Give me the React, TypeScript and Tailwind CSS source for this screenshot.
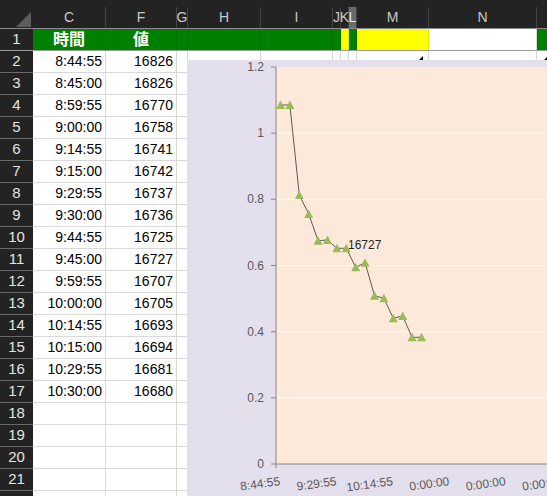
import React from "react";

type Col = { k: string; w: string; fill: string; sel?: boolean; hide?: boolean };

const cols: Col[] = [
  { k: "C", w: "w-[73px]", fill: "bg-[#008000] border-black/10" },
  { k: "F", w: "w-[71px]", fill: "bg-[#008000] border-black/10" },
  { k: "G", w: "w-[11px]", fill: "bg-[#008000] border-black/10" },
  { k: "H", w: "w-[73px]", fill: "bg-[#008000] border-black/10" },
  { k: "I", w: "w-[72px]", fill: "bg-[#008000] border-black/10" },
  { k: "J", w: "w-[8px]", fill: "bg-[#008000] border-black/10" },
  { k: "K", w: "w-[8px]", fill: "bg-[#ffff00] border-black/10" },
  { k: "L", w: "w-[8px]", fill: "bg-[#008000] border-black/10", sel: true },
  { k: "M", w: "w-[72px]", fill: "bg-[#ffff00] border-black/10" },
  { k: "N", w: "w-[108px]", fill: "bg-white border-[#d9d9d9]" },
  { k: "O", w: "w-[80px]", fill: "bg-[#008000] border-black/10", hide: true },
];

const data: [string, string][] = [
  ["8:44:55", "16826"],
  ["8:45:00", "16826"],
  ["8:59:55", "16770"],
  ["9:00:00", "16758"],
  ["9:14:55", "16741"],
  ["9:15:00", "16742"],
  ["9:29:55", "16737"],
  ["9:30:00", "16736"],
  ["9:44:55", "16725"],
  ["9:45:00", "16727"],
  ["9:59:55", "16707"],
  ["10:00:00", "16705"],
  ["10:14:55", "16693"],
  ["10:15:00", "16694"],
  ["10:29:55", "16681"],
  ["10:30:00", "16680"],
];

const ptsY = [105, 105, 195, 214, 240.7, 240, 248.3, 248.3, 267.3, 262.7, 295.7, 298.3, 318.3, 316, 337.3, 337.3];

function Chart() {
  const x0 = 280.5;
  const dx = 9.4;
  const pts = ptsY.map((y, i) => [x0 + i * dx, y] as [number, number]);
  const grid = [67, 133.2, 199.3, 265.5, 331.7, 397.8, 464];
  const ylabels = ["1.2", "1", "0.8", "0.6", "0.4", "0.2", "0"];
  const xl = ["8:44:55", "9:29:55", "10:14:55", "0:00:00", "0:00:00", "0:00:00"];
  return (
    <div className="absolute left-[187px] top-[60px] w-[360px] h-[436px] bg-[#e4dfec]">
      <svg width="360" height="436" viewBox="187 60 360 436" className="block">
        <rect x="276" y="67" width="300" height="397" fill="#fde9d9" />
        {grid.slice(1, 6).map((y) => (
          <line key={y} x1="276" x2="560" y1={y} y2={y} stroke="#ffffff" strokeWidth="1" />
        ))}
        <line x1="276" x2="276" y1="67" y2="468" stroke="#868686" strokeWidth="1" />
        <line x1="276" x2="560" y1="464" y2="464" stroke="#868686" strokeWidth="1" />
        {grid.map((y) => (
          <line key={"t" + y} x1="271" x2="276" y1={y} y2={y} stroke="#868686" strokeWidth="1" />
        ))}
        {ylabels.map((t, i) => (
          <text
            key={t}
            x="264"
            y={grid[i] + 4}
            textAnchor="end"
            fontSize="12"
            fill="#595959"
            fontFamily="'Liberation Sans', sans-serif"
          >
            {t}
          </text>
        ))}
        {xl.map((t, i) => {
          const cx = x0 + i * 6 * dx;
          return (
            <text
              key={i}
              x={cx}
              y="485"
              textAnchor="end"
              fontSize="12"
              fill="#595959"
              fontFamily="'Liberation Sans', sans-serif"
              transform={`rotate(-8 ${cx} 485)`}
            >
              {t}
            </text>
          );
        })}
        <polyline
          points={pts.map((p) => p.join(",")).join(" ")}
          fill="none"
          stroke="#5a5a5a"
          strokeWidth="1"
        />
        {pts.map(([x, y], i) => (
          <polygon
            key={i}
            points={`${x},${y - 4.5} ${x - 4.5},${y + 4} ${x + 4.5},${y + 4}`}
            fill="#9bbb59"
          />
        ))}
        <text
          x="348"
          y="249"
          fontSize="12"
          fill="#262626"
          fontFamily="'Liberation Sans', sans-serif"
        >
          16727
        </text>
      </svg>
    </div>
  );
}

export default function App() {
  const rows = Array.from({ length: 21 }, (_, i) => i + 2);
  return (
    <div
      className="relative w-[547px] h-[496px] overflow-hidden bg-white"
      style={{ fontFamily: "'Liberation Sans', 'Noto Sans CJK JP', sans-serif" }}
    >
      {/* column header */}
      <div className="flex h-[29px] bg-[#232323] border-b border-[#8a8a8a]">
        <div className="w-[33px] shrink-0 relative">
          <svg width="33" height="28" className="absolute left-0 top-0">
            <polygon points="31,12 31,27 16,27" fill="#5d5d5d" />
          </svg>
        </div>
        {cols.map((c) => (
          <div key={c.k} className={`${c.w} shrink-0 flex flex-col justify-end`}>
            <div
              className={`h-[21px] border-r border-[#444444] flex items-center justify-center text-[14px] ${
                c.sel ? "bg-[#6a6a6a] text-[#e8e8e8]" : "text-[#c9c9c9]"
              }`}
            >
              {c.hide ? "" : c.k}
            </div>
          </div>
        ))}
      </div>

      {/* row 1 */}
      <div className="flex h-[22px]">
        <div className="w-[33px] shrink-0 bg-[#232323] border-b border-[#6a6a6a] flex items-center justify-center text-[15px] text-[#e4e4e4]">
          1
        </div>
        {cols.map((c) => (
          <div
            key={c.k}
            className={`${c.w} shrink-0 ${c.fill} border-r border-b-0 flex items-center justify-center`}
          >
            {c.k === "C" && <span className="text-white font-bold text-[16px] leading-none">時間</span>}
            {c.k === "F" && <span className="text-white font-bold text-[16px] leading-none">値</span>}
          </div>
        ))}
      </div>
      <div className="h-px bg-[#9a9a9a] -mt-px relative" />

      {/* data rows */}
      {rows.map((r) => {
        const d = data[r - 2];
        return (
          <div key={r} className="flex h-[22px]">
            <div className="w-[33px] shrink-0 bg-[#232323] border-b border-[#6a6a6a] flex items-center justify-center text-[15px] text-[#e4e4e4]">
              {r <= 21 ? r : ""}
            </div>
            {cols.map((c) => (
              <div
                key={c.k}
                className={`${c.w} shrink-0 border-r border-b border-[#d9d9d9] flex items-center justify-end pr-[3px] text-[14px] text-black`}
              >
                {d && c.k === "C" ? d[0] : d && c.k === "F" ? d[1] : ""}
              </div>
            ))}
          </div>
        );
      })}

      {/* small cell markers */}
      <svg width="4" height="4" className="absolute left-[419px] top-[56px]">
        <polygon points="4,0 4,4 0,4" fill="#000" />
      </svg>
      <svg width="4" height="4" className="absolute left-[544px] top-[56px]">
        <polygon points="4,0 4,4 0,4" fill="#000" />
      </svg>

      <Chart />
    </div>
  );
}
